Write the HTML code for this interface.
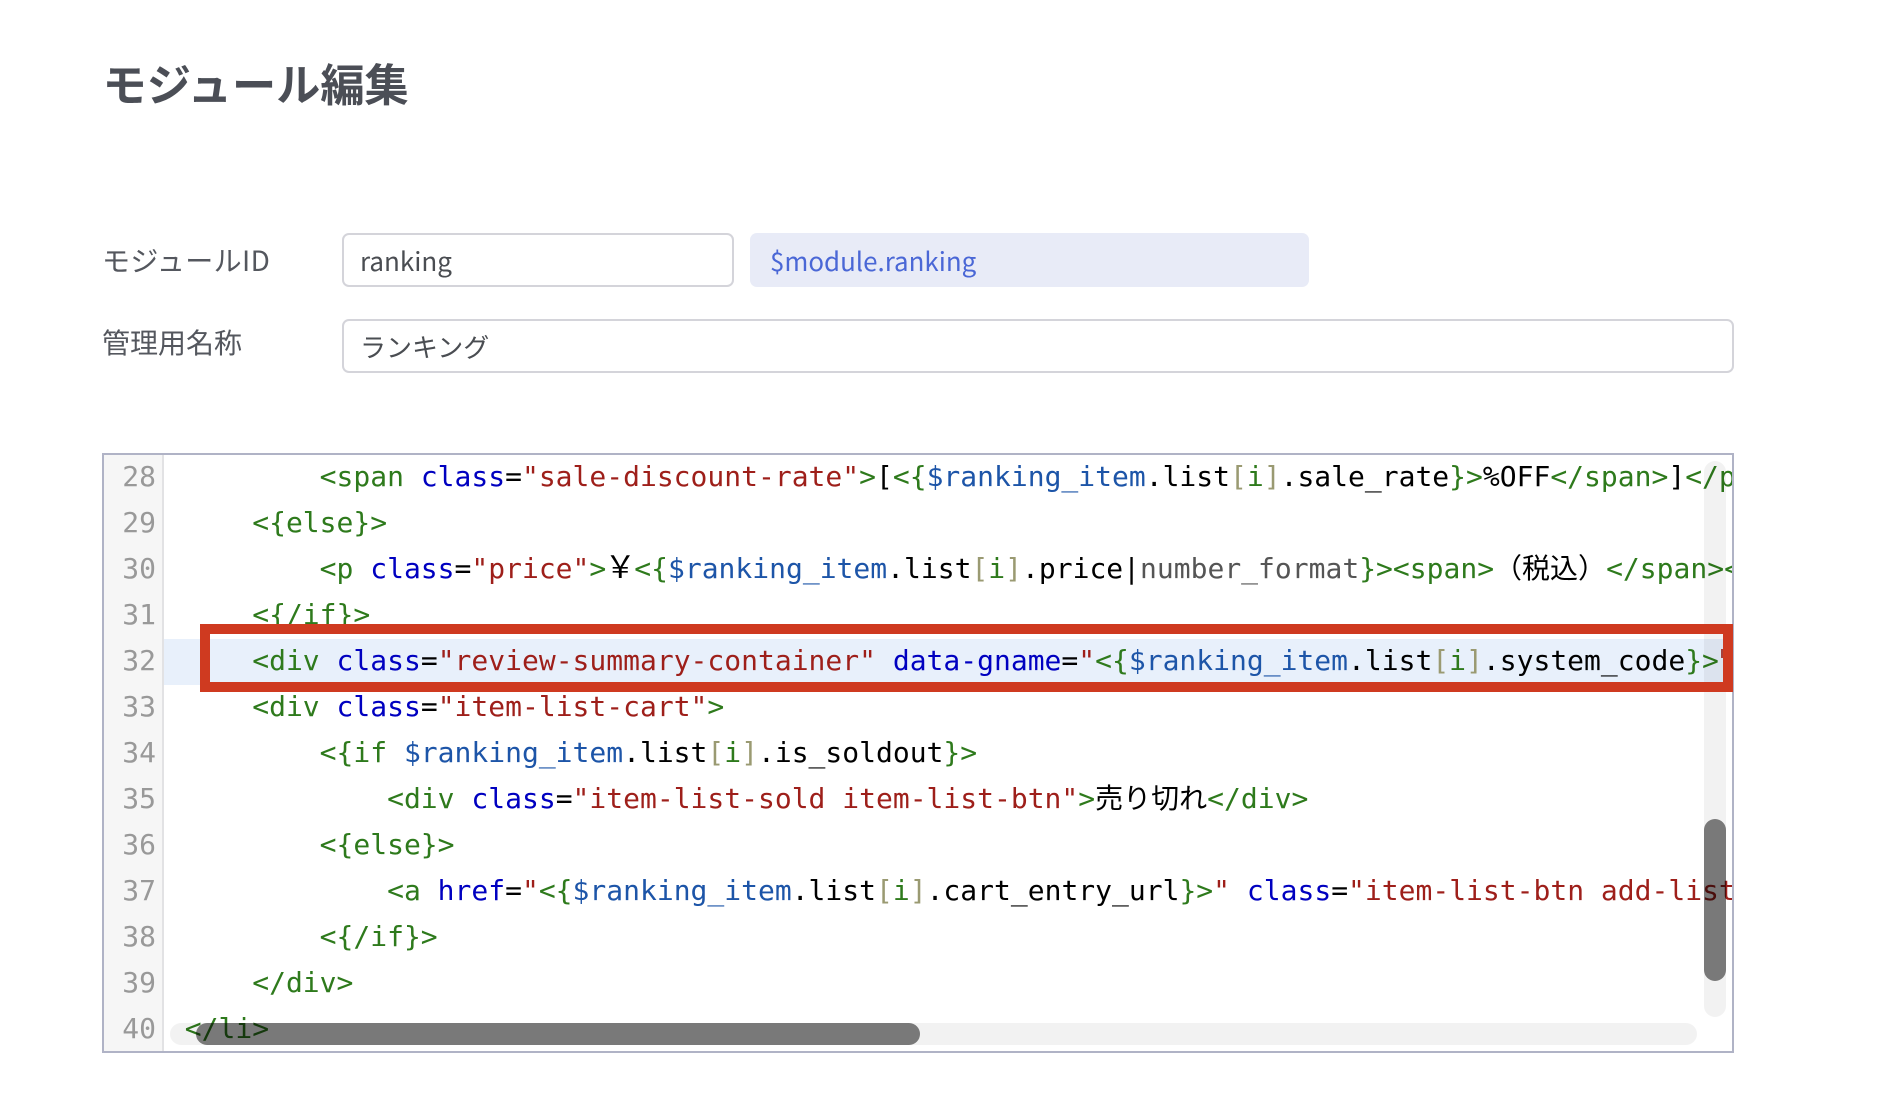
<!DOCTYPE html>
<html lang="ja">
<head>
<meta charset="utf-8">
<title>モジュール編集</title>
<style>
html,body{margin:0;padding:0;background:#fff;width:1901px;height:1107px;overflow:hidden}
*{box-sizing:border-box}
h1{position:absolute;margin:0;left:102.5px;top:50px;font:700 44.2px/64px "Noto Sans CJK JP",sans-serif;color:#4b4e56;white-space:pre}
.lb{position:absolute;left:102px;font:400 28px/40px "Noto Sans CJK JP",sans-serif;color:#54575e;white-space:pre}
.in{position:absolute;height:54px;border:2px solid #d4d4da;border-radius:7px;background:#fff;font:400 26px/51px "Noto Sans CJK JP",sans-serif;color:#4a4d52;padding-left:16px;white-space:pre}
.pill{position:absolute;left:750px;top:233px;width:559px;height:54px;border-radius:7px;background:#e8ebf7;font:400 25.9px/56px "Noto Sans CJK JP",sans-serif;color:#4a67d6;padding-left:20px;white-space:pre}
#ed{position:absolute;left:102px;top:453px;width:1632px;height:600px;border:2px solid #b0b3c6;background:#fff;overflow:hidden}
#gut{position:absolute;left:0;top:0;width:60px;height:100%;background:#f6f6f6;border-right:2px solid #e2e2e4}
#hl{position:absolute;left:60px;right:0;top:184px;height:46px;background:#e8f0fb}
.n{position:absolute;left:0;width:52px;margin-top:-1px;text-align:right;height:46px;font:28px/46px "DejaVu Sans Mono","Noto Sans CJK JP",monospace;color:#999}
.l{position:absolute;left:80.8px;height:46px;margin-top:-1px;font:28px/46px "DejaVu Sans Mono","Noto Sans CJK JP",monospace;color:#000;white-space:pre}
.t{color:#2e7a1c}.a{color:#0000c0}.q{color:#9e1f1a}.v{color:#1d55a8}.b{color:#9a9a72}.f{color:#555}
.y{font-size:31px;line-height:0;margin:0 -1.5px}
#clip{position:absolute;left:60px;top:0;right:0;bottom:0;overflow:hidden}
#clip .l{margin-left:-60px}
.sb{position:absolute;border-radius:11px}
#box{position:absolute;left:200px;top:624px;width:1533px;height:68px;border:10px solid #cf3a20}
#qm{position:absolute;left:1721px;top:649px;width:2px;height:9px;background:#a8403a}
</style>
</head>
<body>
<h1>モジュール編集</h1>
<div class="lb" style="top:240px;letter-spacing:.4px">モジュールID</div>
<div class="in" style="left:342px;top:233px;width:392px">ranking</div>
<div class="pill">$module.ranking</div>
<div class="lb" style="top:322px">管理用名称</div>
<div class="in" style="left:342px;top:319px;width:1392px">ランキング</div>

<div id="ed">
<div id="gut"></div>
<div id="hl"></div>
<div class="n" style="top:0">28</div>
<div class="n" style="top:46px">29</div>
<div class="n" style="top:92px">30</div>
<div class="n" style="top:138px">31</div>
<div class="n" style="top:184px">32</div>
<div class="n" style="top:230px">33</div>
<div class="n" style="top:276px">34</div>
<div class="n" style="top:322px">35</div>
<div class="n" style="top:368px">36</div>
<div class="n" style="top:414px">37</div>
<div class="n" style="top:460px">38</div>
<div class="n" style="top:506px">39</div>
<div class="n" style="top:552px">40</div>
<div id="clip">
<div class="l" style="top:0">        <span class="t">&lt;span</span> <span class="a">class</span>=<span class="q">"sale-discount-rate"</span><span class="t">&gt;</span>[<span class="t">&lt;{</span><span class="v">$ranking_item</span>.list<span class="b">[</span><span class="t">i</span><span class="b">]</span>.sale_rate<span class="t">}&gt;</span>%OFF<span class="t">&lt;/span&gt;</span>]<span class="t">&lt;/p&gt;</span></div>
<div class="l" style="top:46px">    <span class="t">&lt;{else}&gt;</span></div>
<div class="l" style="top:92px">        <span class="t">&lt;p</span> <span class="a">class</span>=<span class="q">"price"</span><span class="t">&gt;</span><span class="y">￥</span><span class="t">&lt;{</span><span class="v">$ranking_item</span>.list<span class="b">[</span><span class="t">i</span><span class="b">]</span>.price|<span class="f">number_format</span><span class="t">}&gt;&lt;span&gt;</span>（税込）<span class="t">&lt;/span&gt;&lt;/p&gt;</span></div>
<div class="l" style="top:138px">    <span class="t">&lt;{/if}&gt;</span></div>
<div class="l" style="top:184px">    <span class="t">&lt;div</span> <span class="a">class</span>=<span class="q">"review-summary-container"</span> <span class="a">data-gname</span>=<span class="q">"</span><span class="t">&lt;{</span><span class="v">$ranking_item</span>.list<span class="b">[</span><span class="t">i</span><span class="b">]</span>.system_code<span class="t">}&gt;</span><span class="q">"</span><span class="t">&gt;&lt;/div&gt;</span></div>
<div class="l" style="top:230px">    <span class="t">&lt;div</span> <span class="a">class</span>=<span class="q">"item-list-cart"</span><span class="t">&gt;</span></div>
<div class="l" style="top:276px">        <span class="t">&lt;{if</span> <span class="v">$ranking_item</span>.list<span class="b">[</span><span class="t">i</span><span class="b">]</span>.is_soldout<span class="t">}&gt;</span></div>
<div class="l" style="top:322px">            <span class="t">&lt;div</span> <span class="a">class</span>=<span class="q">"item-list-sold item-list-btn"</span><span class="t">&gt;</span>売り切れ<span class="t">&lt;/div&gt;</span></div>
<div class="l" style="top:368px">        <span class="t">&lt;{else}&gt;</span></div>
<div class="l" style="top:414px">            <span class="t">&lt;a</span> <span class="a">href</span>=<span class="q">"</span><span class="t">&lt;{</span><span class="v">$ranking_item</span>.list<span class="b">[</span><span class="t">i</span><span class="b">]</span>.cart_entry_url<span class="t">}&gt;</span><span class="q">"</span> <span class="a">class</span>=<span class="q">"item-list-btn add-list-btn"</span><span class="t">&gt;</span></div>
<div class="l" style="top:460px">        <span class="t">&lt;{/if}&gt;</span></div>
<div class="l" style="top:506px">    <span class="t">&lt;/div&gt;</span></div>
<div class="l" style="top:552px"><span class="t">&lt;/li&gt;</span></div>
</div>
<div class="sb" style="left:1600px;top:6px;width:22px;height:556px;background:rgba(0,0,0,.05)"></div>
<div class="sb" style="left:1600px;top:364px;width:22px;height:162px;background:rgba(0,0,0,.5)"></div>
<div class="sb" style="left:66px;top:568px;width:1527px;height:22px;background:rgba(0,0,0,.05)"></div>
<div class="sb" style="left:92px;top:568px;width:724px;height:22px;background:rgba(0,0,0,.5)"></div>
</div>
<div id="qm"></div>
<div id="box"></div>
</body>
</html>
